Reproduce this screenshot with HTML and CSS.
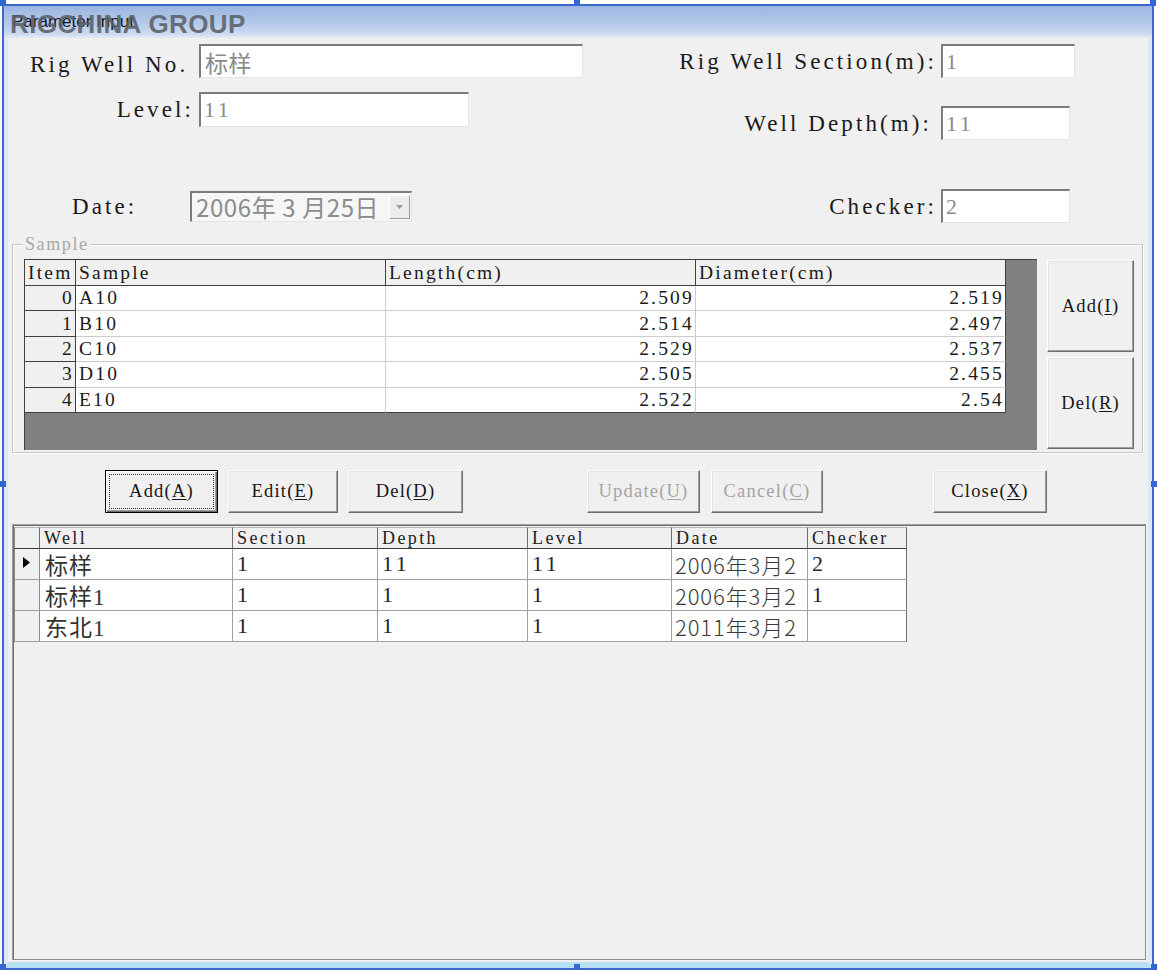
FILE: index.html
```html
<!DOCTYPE html>
<html lang="zh-CN">
<head>
<meta charset="utf-8">
<title>Parameter Input</title>
<link rel="stylesheet" href="styles.css">
</head>
<body>
<div class="window">
  <div class="titlebar"><span class="title">Parameter Input</span></div>
  <div class="client">
    <div class="form">
      <div class="col-left">
        <div class="field f-rwn"><span class="lbl">Rig Well No.</span><span class="inp cjk w384">标样</span></div>
        <div class="field f-level"><span class="lbl">Level:</span><span class="inp w270">11</span></div>
        <div class="field f-date"><span class="lbl">Date:</span>
          <span class="picker"><span class="picker-text">2006年 3 月25日</span><span class="picker-btn"><svg width="7" height="4" viewBox="0 0 7 4"><path d="M0 0H7L3.5 4Z" fill="#9a9a9a"/></svg></span></span>
        </div>
      </div>
      <div class="col-right">
        <div class="field f-sec"><span class="lbl">Rig Well Section(m):</span><span class="inp w134">1</span></div>
        <div class="field f-depth"><span class="lbl">Well Depth(m):</span><span class="inp w129">11</span></div>
        <div class="field f-checker"><span class="lbl">Checker:</span><span class="inp w129">2</span></div>
      </div>
    </div>

    <div class="group">
      <span class="legend">Sample</span>
      <div class="sgrid-wrap">
        <div class="sgrid">
          <div class="sh">Item</div><div class="sh">Sample</div><div class="sh">Length(cm)</div><div class="sh last">Diameter(cm)</div>
          <div class="sf">0</div><div>A10</div><div class="num">2.509</div><div class="num last">2.519</div>
          <div class="sf">1</div><div>B10</div><div class="num">2.514</div><div class="num last">2.497</div>
          <div class="sf">2</div><div>C10</div><div class="num">2.529</div><div class="num last">2.537</div>
          <div class="sf">3</div><div>D10</div><div class="num">2.505</div><div class="num last">2.455</div>
          <div class="sf end">4</div><div class="end">E10</div><div class="num end">2.522</div><div class="num last end">2.54</div>
        </div>
      </div>
      <div class="side-btns">
        <button class="btn tall">Add(<u>I</u>)</button>
        <button class="btn tall">Del(<u>R</u>)</button>
      </div>
    </div>

    <div class="btnrow">
      <button class="btn focus b-add">Add(<u>A</u>)</button>
      <button class="btn b-edit">Edit(<u>E</u>)</button>
      <button class="btn b-del">Del(<u>D</u>)</button>
      <button class="btn disabled b-upd">Update(<u>U</u>)</button>
      <button class="btn disabled b-can">Cancel(<u>C</u>)</button>
      <button class="btn b-close">Close(<u>X</u>)</button>
    </div>

    <div class="panel">
      <div class="dgrid">
        <div class="dh ind"></div><div class="dh">Well</div><div class="dh">Section</div><div class="dh">Depth</div><div class="dh">Level</div><div class="dh">Date</div><div class="dh">Checker</div>

        <div class="di"><svg class="ptr" width="7" height="11" viewBox="0 0 7 11"><path d="M0 0L7 5.5L0 11Z" fill="#000"/></svg></div>
        <div class="dc cjk">标样</div><div class="dc">1</div><div class="dc">11</div><div class="dc">11</div><div class="dc date">2006年3月2</div><div class="dc">2</div>

        <div class="di"></div>
        <div class="dc cjk">标样1</div><div class="dc">1</div><div class="dc">1</div><div class="dc">1</div><div class="dc date">2006年3月2</div><div class="dc">1</div>

        <div class="di"></div>
        <div class="dc cjk">东北1</div><div class="dc">1</div><div class="dc">1</div><div class="dc">1</div><div class="dc date">2011年3月2</div><div class="dc"></div>
      </div>
    </div>
  </div>
  <div class="watermark">RIGCHINA GROUP</div>
</div>

<span class="handle h-tl"></span>
<span class="handle h-tm"></span>
<span class="handle h-tr"></span>
<span class="handle h-ml"></span>
<span class="handle h-mr"></span>
<span class="handle h-bl"></span>
<span class="handle h-bm"></span>
<span class="handle h-br"></span>
</body>
</html>
```

FILE: styles.css
```css
html, body {
  margin: 0;
  background: #fff;
}
body {
  position: relative;
  box-sizing: border-box;
  width: 1158px;
  height: 974px;
  padding: 4px 0 0 2px;
  overflow: hidden;
  font-family: "Liberation Serif", "Noto Sans CJK SC", serif;
  color: #161616;
}

/* window frame */
.window {
  position: relative;
  box-sizing: border-box;
  width: 1152px;
  height: 966px;
  border: 2px solid #3b69c9;
  display: flex;
  flex-direction: column;
  background: #f0f0f0;
}
.titlebar {
  flex: none;
  height: 32px;
  display: flex;
  align-items: center;
  padding-left: 8px;
  background: linear-gradient(#9cb6e2, #b5caea 55%, #cddbf0 88%, #e4ecf7);
}
.title {
  font-family: "Liberation Sans", sans-serif;
  font-size: 17px;
  color: #111;
}
.watermark {
  position: absolute;
  left: 6px;
  top: 5px;
  font-family: "Liberation Sans", sans-serif;
  font-weight: bold;
  font-size: 26px;
  letter-spacing: 0.4px;
  line-height: 1;
  color: rgba(92, 96, 102, 0.88);
  white-space: nowrap;
}
.client {
  flex: 1;
  min-height: 0;
  display: flex;
  flex-direction: column;
  border-left: 4px solid #dfe8f5;
  border-right: 4px solid #dfe8f5;
  border-bottom: 6px solid #b9e1f4;
}

/* top form */
.form {
  flex: none;
  height: 206px;
  display: flex;
  justify-content: space-between;
}
.col-left {
  display: flex;
  flex-direction: column;
}
.col-right {
  display: flex;
  flex-direction: column;
  align-items: flex-end;
  padding-right: 73px;
}
.field {
  display: flex;
  align-items: center;
}
.lbl {
  font-size: 23px;
  letter-spacing: 3.1px;
  line-height: 1;
  white-space: pre;
  color: #1a1a1a;
}
.f-rwn { margin-top: 6px; height: 34px; padding-left: 22px; }
.f-rwn .lbl { width: 169px; padding-top: 6px; }
.f-level { margin-top: 14px; height: 35px; }
.f-level .lbl { box-sizing: border-box; width: 191px; text-align: right; padding-right: 5px; }
.f-date { margin-top: 64px; height: 31px; padding-left: 64px; }
.f-date .lbl { width: 118px; }
.col-right .lbl { margin-right: 4px; }
.f-depth .lbl { margin-right: 9px; }
.f-sec { margin-top: 6px; height: 34px; }
.f-depth { margin-top: 28px; height: 34px; margin-right: 5px; }
.f-checker { margin-top: 49px; height: 34px; margin-right: 5px; }

.inp {
  box-sizing: border-box;
  height: 100%;
  display: flex;
  align-items: center;
  padding-left: 3px;
  background: #fff;
  border-top: 2px solid #7b7b7b;
  border-left: 2px solid #7b7b7b;
  border-right: 1px solid #e4e4e4;
  border-bottom: 1px solid #e4e4e4;
  color: #8a8a8a;
  font-size: 22px;
  letter-spacing: 3.5px;
}
.inp.cjk {
  font-family: "Noto Sans CJK SC", sans-serif;
  font-size: 23px;
  letter-spacing: 0.5px;
  padding-left: 4px;
}
.w384 { width: 384px; }
.w270 { width: 270px; }
.w134 { width: 134px; }
.w129 { width: 129px; }

.picker {
  box-sizing: border-box;
  width: 222px;
  height: 31px;
  display: flex;
  align-items: center;
  justify-content: space-between;
  padding-left: 4px;
  background: #f6f6f6;
  border-top: 2px solid #7b7b7b;
  border-left: 2px solid #7b7b7b;
  border-right: 1px solid #e4e4e4;
  border-bottom: 1px solid #e4e4e4;
}
.picker-text {
  font-family: "Noto Sans CJK SC", sans-serif;
  font-size: 24px;
  letter-spacing: 0.6px;
  line-height: 1;
  color: #8c8c8c;
  white-space: pre;
}
.picker-btn {
  box-sizing: border-box;
  width: 21px;
  height: 24px;
  margin-right: 1px;
  display: flex;
  align-items: center;
  justify-content: center;
  background: #ececec;
  border: 1px solid;
  border-color: #fff #a0a0a0 #a0a0a0 #fff;
}

/* Sample group */
.group {
  position: relative;
  flex: none;
  box-sizing: border-box;
  height: 209px;
  margin: 0 5px 0 4px;
  padding: 14px 8px 2px 11px;
  display: flex;
  border: 1px solid #c6c6c6;
  box-shadow: inset 1px 1px 0 #fff, 1px 1px 0 #fff;
}
.legend {
  position: absolute;
  left: 10px;
  top: -11px;
  padding: 0 2px;
  background: #f0f0f0;
  color: #a8a8a8;
  font-size: 18px;
  letter-spacing: 1.6px;
  line-height: 20px;
}
.sgrid-wrap {
  flex: none;
  box-sizing: border-box;
  width: 1013px;
  height: 191px;
  background: #808080;
  border-top: 1px solid #404040;
  border-left: 1px solid #404040;
}
.sgrid {
  display: grid;
  width: 981px;
  grid-template-columns: 51px 310px 310px 310px;
  grid-template-rows: 26px repeat(5, 25.4px);
  background: #fff;
}
.sgrid > div {
  box-sizing: border-box;
  display: flex;
  align-items: center;
  padding: 0 1px 0 3px;
  border-right: 1px solid #cccccc;
  border-bottom: 1px solid #cccccc;
  font-size: 19.5px;
  letter-spacing: 2.2px;
  white-space: nowrap;
  color: #1a1a1a;
}
.sgrid > .sh {
  background: #f0f0f0;
  border-right-color: #404040;
  border-bottom-color: #404040;
}
.sgrid > .sf {
  background: #f0f0f0;
  justify-content: flex-end;
  border-right-color: #404040;
  border-bottom-color: #404040;
}
.sgrid > .num { justify-content: flex-end; }
.sgrid > .last { border-right-color: #404040; }
.sgrid > .end { border-bottom-color: #404040; }

.side-btns {
  margin-left: 10px;
  width: 87px;
  display: flex;
  flex-direction: column;
  gap: 5px;
  padding-top: 1px;
}

/* buttons */
.btn {
  box-sizing: border-box;
  height: 43px;
  margin: 0;
  padding: 0;
  display: flex;
  align-items: center;
  justify-content: center;
  background: #f0f0f0;
  border: 1px solid;
  border-color: #fff #6d6d6d #6d6d6d #fff;
  box-shadow: inset -1px -1px 0 #a0a0a0, inset 1px 1px 0 #e3e3e3;
  font-family: "Liberation Serif", serif;
  font-size: 18.5px;
  letter-spacing: 1.2px;
  color: #161616;
}
.btn u { text-decoration-thickness: 1px; text-underline-offset: 2px; }
.btn.tall { width: 87px; height: 92px; }
.btn.focus {
  border-color: #000;
  box-shadow: inset 1px 1px 0 #fff, inset -1px -1px 0 #6d6d6d, inset -2px -2px 0 #a0a0a0;
  outline: 1px dotted #333;
  outline-offset: -5px;
}
.btn.disabled { color: #a4a4a4; }

.btnrow {
  flex: none;
  display: flex;
  height: 43px;
  margin-top: 17px;
  padding-left: 97px;
}
.b-add { width: 113px; }
.b-edit { width: 110px; margin-left: 10px; }
.b-del { width: 115px; margin-left: 10px; }
.b-upd { width: 113px; margin-left: 124px; }
.b-can { width: 112px; margin-left: 11px; }
.b-close { width: 114px; margin-left: 110px; }

/* lower data grid */
.panel {
  flex: 1;
  min-height: 0;
  box-sizing: border-box;
  margin: 11px 2px 2px 4px;
  padding: 2px 0 0 1px;
  background: #f0f0f0;
  border: 1px solid;
  border-color: #a0a0a0 #8c8c8c #8c8c8c #a0a0a0;
  box-shadow: inset 1px 1px 0 #6e6e6e;
}
.dgrid {
  display: grid;
  width: 893px;
  grid-template-columns: 26px 193px 145px 150px 144px 136px 99px;
  grid-template-rows: 22px repeat(3, 31px);
}
.dgrid > div {
  box-sizing: border-box;
  display: flex;
  white-space: nowrap;
}
.dh {
  align-items: flex-end;
  padding: 0 0 0 4px;
  background: #f0f0f0;
  border-top: 1px solid #b4b4b4;
  border-right: 1px solid #6e6e6e;
  border-bottom: 1px solid #3c3c3c;
  font-size: 18px;
  line-height: 19px;
  letter-spacing: 2.4px;
  color: #222;
}
.dh.ind { border-left: 1px solid #8c8c8c; }
.di {
  align-items: center;
  padding-left: 8px;
  background: #f0f0f0;
  border-left: 1px solid #8c8c8c;
  border-right: 1px solid #8c8c8c;
  border-bottom: 1px solid #a0a0a0;
}
.ptr { margin-top: -3px; }
.dc {
  align-items: center;
  padding-left: 4px;
  background: #fff;
  border-right: 1px solid #a0a0a0;
  border-bottom: 1px solid #a0a0a0;
  font-size: 22px;
  letter-spacing: 3.5px;
  color: #262626;
}
.dc.cjk {
  font-size: 23px;
  letter-spacing: 1px;
  padding-left: 5px;
  color: #333;
}
.dgrid > div:nth-child(7n) { border-right-color: #6e6e6e; }
.dc.date {
  font-family: "Noto Sans CJK SC", sans-serif;
  font-size: 22px;
  font-weight: 300;
  letter-spacing: 0.9px;
  padding-left: 3px;
  color: #3a3a3a;
}

/* designer selection handles */
.handle {
  position: absolute;
  width: 6px;
  height: 6px;
  background: #3466d4;
}
.h-tl { left: 0; top: 0; }
.h-tm { left: 574px; top: 0; }
.h-tr { left: 1150px; top: 0; }
.h-ml { left: 0; top: 481px; }
.h-mr { left: 1151px; top: 481px; }
.h-bl { left: 0; top: 964px; }
.h-bm { left: 574px; top: 964px; }
.h-br { left: 1151px; top: 964px; }
```
